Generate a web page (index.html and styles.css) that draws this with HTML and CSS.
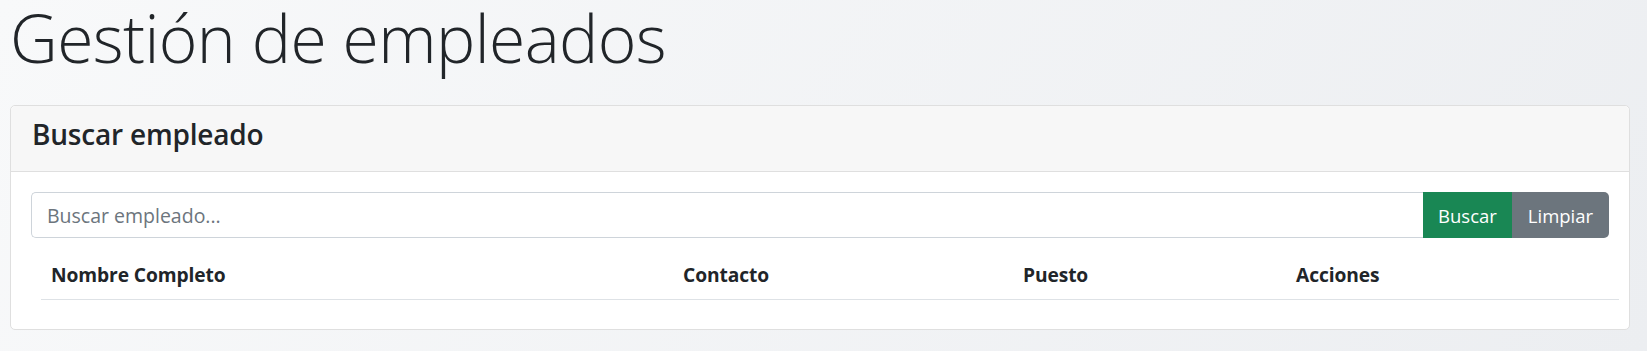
FILE: index.html
```html
<!DOCTYPE html>
<html lang="es">
<head>
<meta charset="utf-8">
<title>Gestión de empleados</title>
<link rel="stylesheet" href="styles.css">
</head>
<body>
<main class="page">
  <h1 class="title">Gestión de empleados</h1>
  <section class="card">
    <header class="card-header">
      <h4 class="card-title">Buscar empleado</h4>
    </header>
    <div class="card-body">
      <form class="search-group">
        <input class="search-input" type="text" placeholder="Buscar empleado...">
        <button type="button" class="btn btn-success">Buscar</button>
        <button type="button" class="btn btn-secondary">Limpiar</button>
      </form>
      <table class="table">
        <colgroup>
          <col class="col-name">
          <col class="col-contact">
          <col class="col-role">
          <col>
        </colgroup>
        <thead>
          <tr>
            <th>Nombre Completo</th>
            <th>Contacto</th>
            <th>Puesto</th>
            <th>Acciones</th>
          </tr>
        </thead>
        <tbody></tbody>
      </table>
    </div>
  </section>
</main>
</body>
</html>
```

FILE: styles.css
```css
html, body {
  margin: 0;
  padding: 0;
}

body {
  min-height: 351px;
  background: linear-gradient(120deg, #f8f9fa 0%, #eceef1 100%);
  color: #212529;
  font-family: "Open Sans", "Noto Sans", "Liberation Sans", sans-serif;
  font-size: 19px;
}

.page {
  padding: 0 17px 0 10px;
}

.title {
  margin: 0;
  font-size: 66px;
  font-weight: 300;
  line-height: 74px;
  letter-spacing: -0.6px;
  color: #212529;
}

.card {
  margin-top: 31px;
  background: #fff;
  border: 1px solid #dfdfdf;
  border-radius: 5px;
}

.card-header {
  background: #f7f7f7;
  border-bottom: 1px solid #dfdfdf;
  border-radius: 5px 5px 0 0;
  padding: 10px 21px 19px;
}

.card-title {
  margin: 0;
  font-size: 28px;
  font-weight: 600;
  line-height: 36px;
  letter-spacing: -0.2px;
}

.card-body {
  padding: 20px 20px 29px 20px;
}

.search-group {
  display: flex;
  height: 46px;
  margin: 0;
}

.search-input {
  flex: 1;
  min-width: 0;
  box-sizing: border-box;
  height: 46px;
  margin: 0;
  padding: 0 15px;
  border: 1px solid #ced4da;
  border-right: none;
  border-radius: 5px 0 0 5px;
  font-family: inherit;
  font-size: 19.5px;
  color: #212529;
  background: #fff;
  outline: none;
}

.search-input::placeholder {
  color: #6c757d;
  opacity: 1;
}

.btn {
  box-sizing: border-box;
  height: 46px;
  margin: 0;
  padding: 0;
  border: none;
  font-family: inherit;
  font-size: 18.5px;
  color: #fff;
  cursor: pointer;
}

.btn-success {
  width: 89px;
  background: #198754;
}

.btn-secondary {
  width: 97px;
  background: #6c757d;
  border-radius: 0 5px 5px 0;
}

.table {
  width: 100%;
  margin: 13px -10px 0 10px;
  border-collapse: collapse;
  table-layout: fixed;
}

.col-name { width: 632px; }
.col-contact { width: 340px; }
.col-role { width: 273px; }

.table th {
  padding: 9.6px 10px;
  text-align: left;
  font-size: 19.2px;
  font-weight: 700;
  line-height: 28.8px;
  border-bottom: 1px solid #dee2e6;
  letter-spacing: -0.1px;
}
```
